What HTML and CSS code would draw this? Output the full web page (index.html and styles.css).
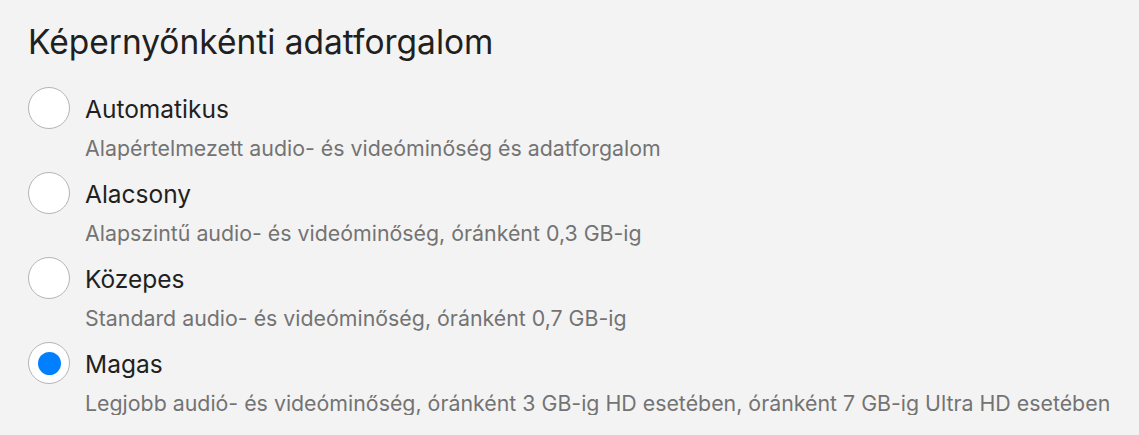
FILE: index.html
```html
<!DOCTYPE html>
<html lang="hu">
<head>
<meta charset="utf-8">
<link rel="stylesheet" href="styles.css">
</head>
<body>
<section class="panel">
  <h1 class="title">Képernyőnkénti adatforgalom</h1>
  <div class="options">
    <label class="option">
      <span class="radio"></span>
      <span class="label">Automatikus</span>
      <span class="desc">Alapértelmezett audio- és videóminőség és adatforgalom</span>
    </label>
    <label class="option">
      <span class="radio"></span>
      <span class="label">Alacsony</span>
      <span class="desc">Alapszintű audio- és videóminőség, óránként 0,3 GB-ig</span>
    </label>
    <label class="option">
      <span class="radio"></span>
      <span class="label">Közepes</span>
      <span class="desc">Standard audio- és videóminőség, óránként 0,7 GB-ig</span>
    </label>
    <label class="option">
      <span class="radio checked"></span>
      <span class="label">Magas</span>
      <span class="desc">Legjobb audió- és videóminőség, óránként 3 GB-ig HD esetében, óránként 7 GB-ig Ultra HD esetében</span>
    </label>
  </div>
</section>
</body>
</html>
```
FILE: styles.css
```css
html, body {
  margin: 0;
  background: #f3f3f3;
}
body {
  font-family: Inter, "Noto Sans", "Liberation Sans", sans-serif;
  color: #221f1f;
}
.panel {
  padding: 20px 28px 0 28px;
}
.title {
  margin: 0;
  font-size: 33.5px;
  font-weight: 400;
  line-height: 44px;
  color: #221f1f;
}
.options {
  margin-top: 23px;
  display: flex;
  flex-direction: column;
  gap: 12px;
}
.option {
  display: grid;
  grid-template-columns: 42px 1fr;
  column-gap: 15px;
  row-gap: 7px;
  align-items: center;
}
.radio {
  width: 42px;
  height: 42px;
  box-sizing: border-box;
  border: 1px solid #b5b5b5;
  border-radius: 50%;
  background: #fff;
  display: flex;
  align-items: center;
  justify-content: center;
}
.radio.checked::after {
  content: "";
  width: 23px;
  height: 23px;
  border-radius: 50%;
  background: #0080ff;
}
.label {
  padding-top: 2px;
  font-size: 24.5px;
  line-height: 26px;
  color: #221f1f;
}
.desc {
  grid-column: 2;
  font-size: 21.35px;
  line-height: 24px;
  color: #737373;
}
```
